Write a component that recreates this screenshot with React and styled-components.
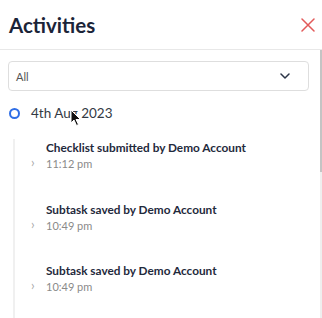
import React from 'react';
import styled, { createGlobalStyle } from 'styled-components';

const GlobalStyle = createGlobalStyle`
   body {
      margin: 0;
      background: #fff;
      font-family: Lato, "Noto Sans", sans-serif;
   }
`;

const activities = [
   { title: 'Checklist submitted by Demo Account', time: '11:12 pm' },
   { title: 'Subtask saved by Demo Account', time: '10:49 pm' },
   { title: 'Subtask saved by Demo Account', time: '10:49 pm' },
];

const App = () => {
   return (
      <Panel>
         <GlobalStyle />
         <Header>
            <Title>Activities</Title>
            <CloseButton aria-label="Close">
               <svg width="14" height="14" viewBox="0 0 14 14">
                  <path d="M1 1 L13 13 M13 1 L1 13" stroke="#e25a5a" strokeWidth="1.5" strokeLinecap="round" />
               </svg>
            </CloseButton>
         </Header>
         <Body>
            <Content>
               <Select>
                  <span>All</span>
                  <svg width="10" height="6" viewBox="0 0 10 6">
                     <path d="M1 1 L5 5 L9 1" fill="none" stroke="#2b3447" strokeWidth="1.5" strokeLinecap="round" strokeLinejoin="round" />
                  </svg>
               </Select>
               <DateRow>
                  <Dot />
                  <DateText>4th Aug 2023</DateText>
                  <Cursor width="12" height="18" viewBox="0 0 12 18">
                     <path d="M1 1 L1 14 L4 11 L6.5 16.5 L8.5 15.5 L6 10.5 L10.5 10.5 Z" fill="#111" stroke="#fff" strokeWidth="1" />
                  </Cursor>
               </DateRow>
               <Timeline>
                  {activities.map((a, i) => (
                     <Item key={i}>
                        <ItemTitle>{a.title}</ItemTitle>
                        <ItemMeta>
                           <Chevron>›</Chevron>
                           <Time>{a.time}</Time>
                        </ItemMeta>
                     </Item>
                  ))}
               </Timeline>
            </Content>
            <Scrollbar>
               <Thumb />
            </Scrollbar>
         </Body>
      </Panel>
   );
};

export default App;

const Panel = styled.div`
   width: 322px;
   height: 318px;
   overflow: hidden;
   display: flex;
   flex-direction: column;
   background: #fff;
`;

const Header = styled.div`
   height: 49px;
   display: flex;
   align-items: center;
   justify-content: space-between;
   padding: 0 7px 0 9px;
   border-bottom: 1px solid #e8e8e8;
   flex-shrink: 0;
`;

const Title = styled.h1`
   margin: 0;
   font-size: 20.5px;
   font-weight: 700;
   color: #1b2438;
   padding-top: 1px;
`;

const CloseButton = styled.button`
   border: none;
   background: transparent;
   padding: 0;
   width: 14px;
   height: 14px;
   display: flex;
   margin-top: 1px;
   cursor: pointer;
`;

const Body = styled.div`
   flex: 1;
   display: flex;
   min-height: 0;
`;

const Content = styled.div`
   flex: 1;
   padding: 11px 11px 0 8px;
`;

const Select = styled.div`
   height: 30px;
   box-sizing: border-box;
   border: 1px solid #dedede;
   border-radius: 4px;
   display: flex;
   align-items: center;
   justify-content: space-between;
   padding: 0 18px 0 7px;
   font-size: 11px;
   color: #555;
`;

const DateRow = styled.div`
   position: relative;
   display: flex;
   align-items: center;
   margin-top: 14px;
   height: 16px;
`;

const Dot = styled.span`
   width: 11px;
   height: 11px;
   box-sizing: border-box;
   border: 2.5px solid #2f6ee6;
   border-radius: 50%;
   margin-left: 1px;
`;

const DateText = styled.span`
   margin-left: 11px;
   font-size: 13.5px;
   color: #333a44;
`;

const Cursor = styled.svg`
   position: absolute;
   left: 62px;
   top: 4px;
`;

const Timeline = styled.div`
   margin-top: 18px;
   margin-left: 5px;
   border-left: 2px solid #f0f0f0;
   padding-left: 31px;
   padding-top: 1px;
`;

const Item = styled.div`
   height: 61.5px;
`;

const ItemTitle = styled.div`
   font-size: 11.8px;
   font-weight: 700;
   color: #1f2a3c;
   line-height: 15px;
`;

const ItemMeta = styled.div`
   position: relative;
   display: flex;
   align-items: center;
   margin-top: 1px;
   line-height: 15px;
`;

const Chevron = styled.span`
   position: absolute;
   left: -15px;
   font-size: 13px;
   color: #aaa;
   top: -1px;
`;

const Time = styled.span`
   font-size: 11px;
   color: #8a8a8a;
`;

const Scrollbar = styled.div`
   width: 2px;
   background: #efefef;
   display: flex;
   flex-direction: column;
`;

const Thumb = styled.div`
   height: 122px;
   background: #c4c4c4;
`;
